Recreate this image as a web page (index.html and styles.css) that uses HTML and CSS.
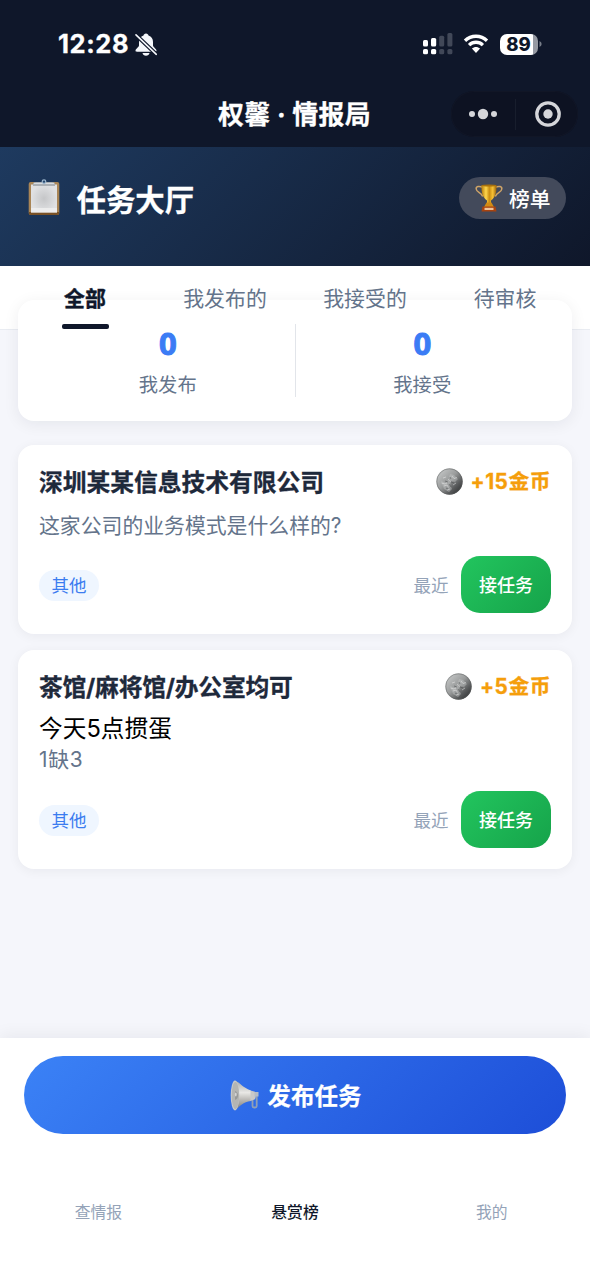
FILE: index.html
```html
<!DOCTYPE html>
<html lang="zh-CN">
<head>
<meta charset="utf-8">
<title>权馨 · 情报局</title>
<link rel="stylesheet" href="styles.css">
</head>
<body>
<svg class="defs" width="0" height="0" aria-hidden="true">
  <defs>
    <linearGradient id="silver" x1=".1" y1=".1" x2=".9" y2=".9"><stop offset="0" stop-color="#c4c6c6"/><stop offset=".45" stop-color="#9a9c9c"/><stop offset=".75" stop-color="#5a5c5d"/><stop offset="1" stop-color="#333536"/></linearGradient>
    <symbol id="coin" viewBox="0 0 27 27">
      <circle cx="13.5" cy="13.5" r="13.2" fill="url(#silver)"/>
      <circle cx="13.5" cy="13.5" r="12.700" fill="none" stroke="#5b5d5e" stroke-opacity=".6" stroke-width=".7"/>
      <path d="M5 13l5 2 2-3 3 1-1 4 2 4-3 3-5-3z" fill="#c3c5c5" opacity=".45"/>
      <path d="M14 6l4 1 4 4-3 3-4-1-2-4z" fill="#cfd1d1" opacity=".35"/>
      <path d="M5.500 15l3.500 1 2-1M8 18l3-1 1.500 2.500M12 11l3 2.500M16 8l2 2.500 3-1M17 17l3-2M11 22l3-1M7 10l3-1" fill="none" stroke="#f0f1f1" stroke-width=".8" opacity=".6"/>
      <path d="M9 13l3 1M13 16l2 3M15 14l3 1M10 20l2 1M14 9l1 2" fill="none" stroke="#4b4d4e" stroke-width=".9" opacity=".6"/>
    </symbol>
  </defs>
</svg>
<header class="top">
  <div class="status">
    <div class="status-left">
      <span class="clock">12:28</span>
      <svg class="bell" viewBox="0 0 22 23">
        <path d="M11 .5c-1.500 0-2.300 1-2.500 2C5.500 3.500 4 6 4 9v3.500c0 1.500-3.500 3.500-3.500 5 0 .8.500 1.200 1.300 1.200h18.400c.8 0 1.300-.4 1.300-1.200 0-1.500-3.500-3.500-3.500-5V9c0-3-1.500-5.500-4.500-6.500-.2-1-1-2-2.500-2zM7.500 20h7c-.4 1.700-1.700 2.700-3.500 2.700S7.900 21.700 7.500 20z" fill="#f5f7fb"/>
        <path d="M.5 1.500l21 20" stroke="#0f172a" stroke-width="3.800"/>
        <path d="M1 1.800l20.300 19.500" stroke="#f5f7fb" stroke-width="1.600" stroke-linecap="round"/>
      </svg>
    </div>
    <div class="status-right">
      <svg class="signal" viewBox="0 0 30 22">
        <g fill="#fff"><rect x="0" y="7" width="5" height="6.500" rx="1.500"/><rect x="8" y="5" width="5.200" height="8.500" rx="1.500"/><rect x="0" y="16" width="5" height="5.300" rx="1.600"/><rect x="8" y="16" width="5.200" height="5.300" rx="1.600"/></g>
        <g fill="#414858"><rect x="16.200" y="2.800" width="5" height="10.700" rx="1.500"/><rect x="24.400" y="0" width="5" height="13.500" rx="1.500"/><rect x="16.200" y="16" width="5" height="5.300" rx="1.600"/><rect x="24.400" y="16" width="5" height="5.300" rx="1.600"/></g>
      </svg>
      <svg class="wifi" viewBox="0 0 26 20">
        <path d="M2 6.800C8.200.7 17.800.7 24 6.800M6.100 11.100c4-3.800 9.800-3.800 13.800 0" fill="none" stroke="#fff" stroke-width="3.300"/>
        <path d="M8.900 14.600c2.400-2.300 5.800-2.300 8.200 0L13 19z" fill="#fff"/>
      </svg>
      <div class="battery"><span class="battery-level">89</span><svg class="battery-cap" viewBox="0 0 3 6"><path d="M.5 0C3.300 1.500 3.300 4.500.5 6z" fill="#777d88"/></svg></div>
    </div>
  </div>
  <div class="nav">
    <h1 class="nav-title">权馨 · 情报局</h1>
    <div class="capsule">
      <svg class="more" viewBox="0 0 28 12"><g fill="#d5d6da"><circle cx="3" cy="6" r="3"/><circle cx="14" cy="6" r="5.200"/><circle cx="25" cy="6" r="3"/></g></svg>
      <i class="capsule-line"></i>
      <svg class="target" viewBox="0 0 26 26"><circle cx="13" cy="13" r="11.200" fill="none" stroke="#d5d6da" stroke-width="3.300"/><circle cx="13" cy="13" r="4.700" fill="#d5d6da"/></svg>
    </div>
  </div>
</header>

<section class="hero">
  <svg class="clipboard" viewBox="0 0 32 37">
    <defs><radialGradient id="paper"><stop offset="0" stop-color="#c5c6c8"/><stop offset="1" stop-color="#e0e1e3"/></radialGradient></defs>
    <rect x=".7" y="3" width="30.600" height="33" rx="2" fill="#a98556"/>
    <path d="M1 33h30v1.500q0 1.500-2 1.500H3q-2 0-2-1.500z" fill="#795126"/>
    <rect x="3" y="5.500" width="26" height="28" fill="url(#paper)"/>
    <path d="M3 29h26v4.500H3z" fill="#f0f0f0" opacity=".8"/>
    <path d="M5 7V5q0-2 3-2h16q3 0 3 2v2z" fill="#abb0b5"/>
    <path d="M6 4.500h20" stroke="#d8dce0" stroke-width="1"/>
    <circle cx="16" cy="2.600" r="1.800" fill="#29496e" stroke="#9cb6ce" stroke-width="1.200"/>
  </svg>
  <h2 class="hero-title">任务大厅</h2>
  <div class="rank">
    <svg class="trophy" viewBox="0 0 28 28">
      <defs><linearGradient id="gold"><stop offset="0" stop-color="#b47a0c"/><stop offset=".3" stop-color="#ffd84e"/><stop offset=".52" stop-color="#c98d12"/><stop offset=".75" stop-color="#f8c235"/><stop offset="1" stop-color="#96600c"/></linearGradient></defs>
      <path d="M8 3.500C4 1.500.8 2.500 1.200 5c.4 3.500 4.800 3 6.500 7.500M20 3.500c4-2 7.200-1 6.800 1.500-.4 3.500-4.800 3-6.500 7.500" fill="none" stroke="#cfa468" stroke-width="1.500"/>
      <path d="M6.500 1h15c.3 7-1 12.500-5.500 15.500V20h-4v-3.500C7.500 13.500 6.200 8 6.500 1z" fill="url(#gold)"/>
      <ellipse cx="14" cy="1.500" rx="7.300" ry="1" fill="#a9710c"/>
      <path d="M11.500 18.500h5l2.500 4.500H9z" fill="#d28b14"/>
      <path d="M7.500 22.500h13l1 5h-15z" fill="#a8430f"/><path d="M9.500 23.800h9v2.200h-9z" fill="#f0c49a"/>
    </svg>
    <span class="rank-text">榜单</span>
  </div>
</section>

<nav class="tabs">
  <div class="tab tab-active"><span class="tab-text">全部</span></div>
  <div class="tab"><span class="tab-text">我发布的</span></div>
  <div class="tab"><span class="tab-text">我接受的</span></div>
  <div class="tab"><span class="tab-text">待审核</span></div>
</nav>

<main class="content">
  <section class="stats">
    <div class="stat"><b class="stat-num">0</b><span class="stat-label">我发布</span></div>
    <i class="stats-line"></i>
    <div class="stat"><b class="stat-num">0</b><span class="stat-label">我接受</span></div>
  </section>

  <article class="card">
    <div class="card-head"><h3 class="card-title">深圳某某信息技术有限公司</h3><div class="reward"><svg class="coin"><use href="#coin"/></svg><span>+15金币</span></div></div>
    <p class="desc">这家公司的业务模式是什么样的?</p>
    <div class="card-foot"><span class="tag">其他</span><span class="time">最近</span><button class="accept">接任务</button></div>
  </article>

  <article class="card">
    <div class="card-head"><h3 class="card-title card-title-mixed">茶馆/麻将馆/办公室均可</h3><div class="reward"><svg class="coin"><use href="#coin"/></svg><span>+5金币</span></div></div>
    <p class="subject">今天5点掼蛋</p>
    <p class="desc desc-tight">1缺3</p>
    <div class="card-foot"><span class="tag">其他</span><span class="time">最近</span><button class="accept">接任务</button></div>
  </article>
</main>

<footer class="bottom">
  <button class="publish">
    <svg class="horn" viewBox="0 0 29 31">
      <defs><linearGradient id="horn-metal" x1="0" y1="0" x2="0" y2="1"><stop offset="0" stop-color="#a9abac"/><stop offset=".4" stop-color="#e9e8e5"/><stop offset=".65" stop-color="#b9b7b3"/><stop offset="1" stop-color="#74777a"/></linearGradient></defs>
      <path d="M22.500 17v9q0 1.500 1.600 1.500h1q1.600 0 1.600-1.500V14" fill="none" stroke="#8f9fb6" stroke-width="1.800"/>
      <path d="M4.500.8C10 2 12 7.500 21 10.500V21C13 21.500 10 26.500 5 30.300z" fill="url(#horn-metal)"/>
      <path d="M20.500 10.500l4.500 1.300q1.600 3.500 0 7.500l-4.500 1.700z" fill="#c9c9c8"/>
      <path d="M24.500 12h4v4.500h-4z" fill="#b5bcc6"/>
      <ellipse cx="5" cy="15.500" rx="4.300" ry="14.900" fill="#c9cac9"/>
      <ellipse cx="5.400" cy="15.500" rx="3.700" ry="13.500" fill="#b4b5b3"/>
      <path d="M5 11q3 1 3 4.500T5 20z" fill="#979998"/><ellipse cx="5.800" cy="14.500" rx=".9" ry="2" fill="#d5d5d5"/>
    </svg>
    <span class="publish-text">发布任务</span>
  </button>
  <nav class="tabbar"><span>查情报</span><span class="tabbar-active">悬赏榜</span><span>我的</span></nav>
</footer>
</body>
</html>
```

FILE: styles.css
```css
* { box-sizing: border-box; }
html, body { height: 100%; }
body {
  margin: 0;
  display: flex;
  flex-direction: column;
  width: 590px;
  height: 1280px;
  overflow: hidden;
  background: #f5f6fb;
  font-family: Inter, "Noto Sans CJK SC", sans-serif;
  color: #0f172a;
}
h1, h2, h3, p { margin: 0; }
button { border: 0; padding: 0; font-family: inherit; color: #fff; }
svg { display: block; flex: none; }
.defs { height: 0; }

.top { height: 147px; background: #0f172a; color: #fff; flex: none; }
.status { height: 88px; padding: 0 48px 0 58px; display: flex; align-items: center; justify-content: space-between; }
.status-left, .status-right { display: flex; align-items: center; }
.clock { font-size: 25.500px; font-weight: 700; line-height: 30px; width: 77px; letter-spacing: .6px; -webkit-text-stroke: .3px; }
.bell { width: 22px; height: 23px; }
.signal { width: 30px; height: 22px; }
.wifi { width: 26px; height: 20px; margin: 0 11px 0 10px; }
.battery { display: flex; align-items: center; gap: 1px; }
.battery-level { width: 38px; height: 21px; border-radius: 7px; background: linear-gradient(90deg, #fff 33.500px, #9599a2 33.500px); color: #0f172a; font-size: 18.500px; font-weight: 800; line-height: 21px; padding-right: 1px; text-align: center; }
.battery-cap { width: 3px; height: 6px; }

.nav { height: 59px; padding: 3px 12px 10px 138px; display: flex; align-items: center; justify-content: space-between; }
.nav-title { width: 313px; padding-top: 2px; text-align: center; font-size: 25.900px; font-weight: 700; line-height: 36px; letter-spacing: .3px; -webkit-text-stroke: .3px; }
.capsule { width: 127px; height: 46px; border-radius: 23px; background: #0d1222; box-shadow: inset 0 0 0 1px #111626; display: flex; align-items: center; padding-left: 18px; }
.more { width: 28px; height: 12px; }
.capsule-line { width: 1px; height: 31px; background: #181e2d; margin: 0 18.500px 0 18px; }
.target { width: 26px; height: 26px; }

.hero { height: 119px; padding: 30px 24px 0 28px; display: flex; align-items: flex-start; background: linear-gradient(135deg, #1e3a5f 0%, #0f172a 100%); color: #fff; flex: none; }
.clipboard { width: 32px; height: 37px; margin-top: 2px; }
.hero-title { font-size: 29.400px; line-height: 42px; font-weight: 700; margin: 3px 0 0 16.500px; -webkit-text-stroke: .3px; }
.rank { margin-left: auto; width: 107px; height: 42px; border-radius: 21px; background: #434a5b; display: flex; align-items: center; padding-left: 16px; gap: 6px; font-size: 20.800px; font-weight: 500; line-height: 40px; }
.rank-text { padding-top: 3px; }
.trophy { width: 28px; height: 28px; }

.tabs { height: 64px; padding: 0 15px; display: flex; background: #fff; border-bottom: 1px solid #e9ecf2; flex: none; }
.tab { flex: 1; display: flex; flex-direction: column; align-items: center; padding-top: 17px; color: #64748b; font-size: 20.900px; line-height: 32px; }
.tab-text { position: relative; z-index: 2; }
.tab-active { color: #0f172a; font-weight: 700; -webkit-text-stroke: .4px; }
.tab-active::after { content: ""; position: relative; z-index: 2; width: 47px; height: 5px; border-radius: 2px; background: #0f172a; margin-top: 9px; }

.content { flex: 1; padding: 0 18px; }
.stats { position: relative; z-index: 1; height: 121px; margin: -30px 0 24px; padding: 24px 0; display: flex; background: #fff; border-radius: 16px; box-shadow: 0 3px 16px rgba(15, 23, 42, .07); }
.stats-line { width: 1px; background: #e2e5ea; }
.stat { flex: 1; display: flex; flex-direction: column; align-items: center; }
.stat:first-child { padding-left: 23px; }
.stat:last-child { padding-right: 23px; }
.stat-num { font-family: "Open Sans", "Noto Sans", sans-serif; font-size: 31px; line-height: 38px; font-weight: 700; color: #3b7cf5; -webkit-text-stroke: 1px; }
.stat-label { font-size: 19.300px; line-height: 28px; margin-top: 9px; color: #64748b; }

.card { margin-bottom: 16px; padding: 21px; background: #fff; border-radius: 16px; box-shadow: 0 2px 12px rgba(15, 23, 42, .055); }
.card-head { display: flex; justify-content: space-between; align-items: center; height: 33px; }
.card-title { font-size: 23.750px; font-weight: 700; color: #1e293b; line-height: 33px; -webkit-text-stroke: .3px; }
.card-title-mixed { letter-spacing: -.2px; }
.reward { display: flex; align-items: center; gap: 8px; margin-top: -2px; color: #f59e0b; font-size: 20.800px; font-weight: 700; line-height: 32px; letter-spacing: .5px; -webkit-text-stroke: .3px; }
.reward .coin { width: 27px; height: 27px; }
.desc { margin-top: 11px; height: 31px; font-size: 20.850px; line-height: 32px; color: #64748b; }
.subject { margin-top: 8px; height: 32px; font-size: 23.700px; line-height: 33px; color: #000; }
.desc-tight { margin-top: 0; height: 32px; letter-spacing: .7px; }
.card-foot { margin-top: 15px; height: 57px; display: flex; align-items: center; }
.tag { width: 60px; height: 31px; margin-top: 2px; border-radius: 16px; background: #eff6ff; color: #3b7cf0; font-size: 17.500px; line-height: 32px; text-align: center; }
.time { margin: 2px 12.500px 0 auto; color: #94a3b8; font-size: 17.500px; line-height: 26px; }
.accept { width: 90px; height: 57px; border-radius: 19px; background: linear-gradient(135deg, #22c55e, #16a34a); font-size: 18px; font-weight: 500; line-height: 57px; padding-top: 1px; }

.bottom { height: 242px; flex: none; padding: 18px 24px 0; background: #fff; box-shadow: 0 -3px 16px rgba(15, 23, 42, .06); }
.publish { width: 100%; height: 78px; border-radius: 39px; background: linear-gradient(135deg, #3b82f6, #1d4ed8); display: flex; align-items: center; justify-content: center; gap: 8px; padding-left: 2px; font-size: 23.600px; font-weight: 700; line-height: 34px; -webkit-text-stroke: .2px; }
.publish-text { padding-top: 3px; }
.horn { width: 29px; height: 31px; }
.tabbar { display: flex; margin: 67px -24px 0; font-size: 15.800px; line-height: 24px; color: #94a3b8; }
.tabbar span { flex: 1; text-align: center; }
.tabbar .tabbar-active { color: #0f172a; font-weight: 500; }
```
